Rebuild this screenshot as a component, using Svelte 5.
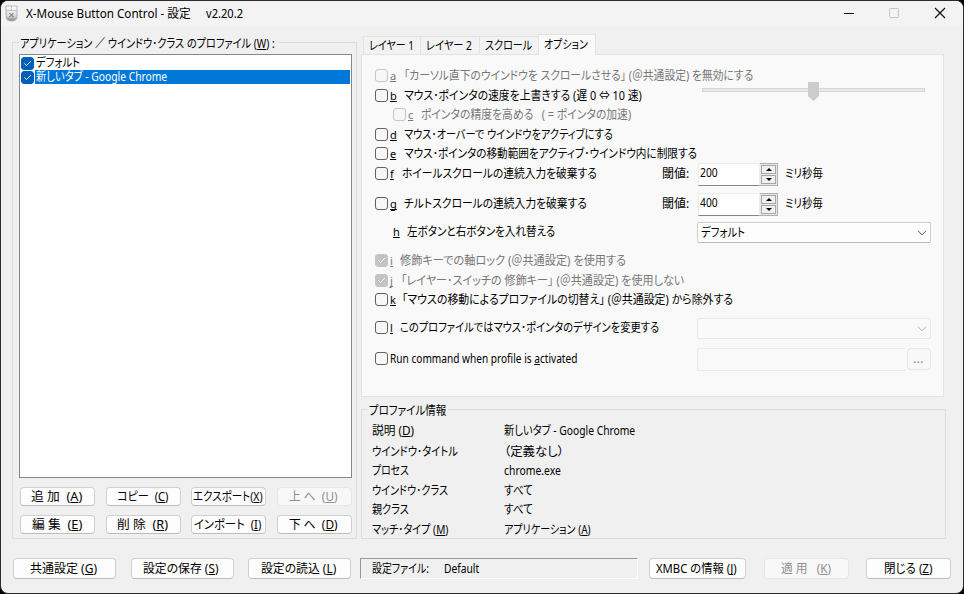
<script>
  // Labels use "&" before their mnemonic character, which is underlined.
  const parse = (s) => {
    const i = s.indexOf('&');
    return i < 0 ? [s, '', ''] : [s.slice(0, i), s[i + 1], s.slice(i + 2)];
  };

  // Condenses a label horizontally so that it occupies the given width.
  function fit(node, width) {
    const inner = node.firstElementChild;
    const natural = inner.offsetWidth;
    if (width && natural) {
      node.style.width = width + 'px';
      inner.style.transform = `scaleX(${width / natural})`;
    }
  }

  const profiles = [
    { name: 'デフォルト', w: 44, selected: false },
    { name: '新しいタブ - Google Chrome', w: 131, selected: true }
  ];
  const profileButtons = [
    { t: '追 加  (&A)', w: 51 }, { t: 'コピー  (&C)', w: 51 }, { t: 'エクスポート(&X)', w: 70 }, { t: '上 へ  (&U)', w: 49, off: true },
    { t: '編 集  (&E)', w: 50 }, { t: '削 除  (&R)', w: 51 }, { t: 'インポート  (&I)', w: 67 }, { t: '下 へ  (&D)', w: 49 }
  ];
  const tabs = [
    { t: 'レイヤー 1', w: 45 }, { t: 'レイヤー 2', w: 46 }, { t: 'スクロール', w: 47 }, { t: 'オプション', w: 44, active: true }
  ];
  const options = [
    { k: 'a', t: '「カーソル直下のウインドウを スクロールさせる」 (＠共通設定) を無効にする', x: 404, w: 349, gap: 0, off: true },
    { k: 'b', t: 'マウス･ポインタの速度を上書きする (遅 0 ⇔ 10 速)', x: 404, w: 238, gap: 2, slider: true },
    { k: 'c', t: 'ポインタの精度を高める   ( = ポインタの加速)', x: 421, w: 210, gap: 1, off: true, indent: true },
    { k: 'd', t: 'マウス･オーバーで ウインドウをアクティブにする', x: 404, w: 209, gap: 2 },
    { k: 'e', t: 'マウス･ポインタの移動範囲をアクティブ･ウインドウ内に制限する', x: 404, w: 293, gap: 1 },
    { k: 'f', t: 'ホイールスクロールの連続入力を破棄する', x: 402, w: 195, gap: 2, spin: '200' },
    { k: 'g', t: 'チルトスクロールの連続入力を破棄する', x: 404, w: 183, gap: 12, spin: '400' },
    { k: 'h', t: '左ボタンと右ボタンを入れ替える', x: 407, w: 148, gap: 10, plain: true, combo: 'デフォルト' },
    { k: 'i', t: '修飾キーでの軸ロック (＠共通設定) を使用する', x: 400, w: 226, gap: 11, off: true, checked: true },
    { k: 'j', t: '「レイヤー･スイッチの 修飾キー」 (＠共通設定) を使用しない', x: 401, w: 283, gap: 2, off: true, checked: true },
    { k: 'k', t: '「マウスの移動によるプロファイルの切替え」 (＠共通設定) から除外する', x: 402, w: 331, gap: 1 },
    { k: 'l', t: 'このプロファイルではマウス･ポインタのデザインを変更する', x: 400, w: 259, gap: 10, combo: '', comboOff: true },
    { t: 'Run command when profile is &activated', w: 187, gap: 13, path: true }
  ];
  const info = [
    { t: '説明 (&D)', w: 42, v: '新しいタブ - Google Chrome', vw: 131, h: 21 },
    { t: 'ウインドウ･タイトル', w: 86, v: '（定義なし）', vw: 60, h: 19 },
    { t: 'プロセス', w: 37, v: 'chrome.exe', vw: 57, h: 20 },
    { t: 'ウインドウ･クラス', w: 76, v: 'すべて', vw: 29, h: 19 },
    { t: '親クラス', w: 37, v: 'すべて', vw: 29, h: 20 },
    { t: 'マッチ･タイプ (&M)', w: 76, v: 'アプリケーション (&A)', vw: 87, h: 20 }
  ];
</script>

{#snippet label(text, w)}
  {@const p = parse(text)}
  <span class="label" use:fit={w}><span class="ink">{p[0]}{#if p[1]}<u>{p[1]}</u>{/if}{p[2]}</span></span>
{/snippet}

{#snippet checkbox(checked, off)}
  <span class="check" class:checked class:off>
    {#if checked}
      <svg width="11" height="11" viewBox="0 0 11 11"><path d="M2.5 5.5 4.5 7.5 8.7 3.3" /></svg>
    {/if}
  </span>
{/snippet}

{#snippet chevron()}
  <svg class="chevron" width="10" height="6" viewBox="0 0 10 6"><path d="M1 .8 5 4.8 9 .8" /></svg>
{/snippet}

<div class="desktop">
  <div class="window">
    <header>
      <svg class="app-icon" width="13" height="17" viewBox="0 0 13 17">
        <defs><linearGradient id="mouse" x2="0" y2="1"><stop offset="0" stop-color="#fff" /><stop offset=".65" stop-color="#d8d8d8" /><stop offset="1" stop-color="#858585" /></linearGradient></defs>
        <path d="M1 1h11v10.5q0 4.5-5.5 4.5T1 11.500z" fill="url(#mouse)" stroke="#aaa" stroke-width=".8" />
        <path d="M1 5.500h11M6.500 1v4.500" stroke="#bbb" stroke-width=".8" fill="none" />
        <path d="M4.500 8 8.500 12M8.500 8 4.500 12" stroke="#666" fill="none" />
      </svg>
      <span class="title">{@render label('X-Mouse Button Control - 設定', 165)}</span>
      <span class="version">{@render label('v2.20.2', 37)}</span>
      <svg class="controls" width="104" height="14" viewBox="0 0 104 14">
        <path d="M3 6.500h10" stroke="#111" />
        <rect x="48.500" y="1.500" width="9" height="9" rx="1" stroke="#c5c5c5" fill="none" />
        <path d="M94 1 104 11M104 1 94 11" stroke="#111" stroke-width="1.200" />
      </svg>
    </header>

    <main>
      <section class="group profiles">
        <div class="legend">{@render label('アプリケーション ／ ウインドウ･クラス のプロファイル (&W) :', 255)}</div>
        <div class="list">
          {#each profiles as p}
            <div class="item">
              {@render checkbox(true, false)}
              <div class="name" class:selected={p.selected}>{@render label(p.name, p.w)}</div>
            </div>
          {/each}
        </div>
        <div class="buttons">
          {#each profileButtons as b}
            <button disabled={b.off}>{@render label(b.t, b.w)}</button>
          {/each}
        </div>
      </section>

      <section class="right">
        <nav>
          {#each tabs as t}
            <div class="tab" class:active={t.active}>{@render label(t.t, t.w)}</div>
          {/each}
        </nav>
        <div class="panel">
          {#each options as o}
            <div class="row" class:off={o.off} class:indent={o.indent} style:margin-top="{o.gap}px">
              <div class="caption" class:narrow={o.spin}>
                {#if o.plain}<span class="blank"></span>{:else}{@render checkbox(o.checked, o.off)}{/if}
                {#if o.k}
                  <span class="key" style:width="{o.x - (o.indent ? 408 : o.plain ? 393 : 390)}px"><u>{o.k}</u></span>
                {/if}
                {@render label(o.t, o.w)}
              </div>
              {#if o.slider}
                <div class="slider">
                  <svg width="11" height="19" viewBox="0 0 11 19"><path d="M0 0h11v14L5.500 19 0 14z" fill="#ccc" /></svg>
                </div>
              {:else if o.spin}
                <span class="threshold">{@render label('閾値:', 27)}</span>
                <div class="number">{@render label(o.spin, 18)}</div>
                <div class="spinner">
                  <span><svg width="6" height="3"><path d="M0 3 3 0 6 3z" /></svg></span>
                  <span><svg width="6" height="3"><path d="M0 0 3 3 6 0z" /></svg></span>
                </div>
                {@render label('ミリ秒毎', 38)}
              {:else if o.combo !== undefined}
                <div class="combo" class:off={o.comboOff}>
                  {#if o.combo}{@render label(o.combo, 44)}{/if}
                  {@render chevron()}
                </div>
              {:else if o.path}
                <div class="path"></div>
                <button class="browse" disabled>{@render label('...', 11)}</button>
              {/if}
            </div>
          {/each}
        </div>

        <div class="group info">
          <div class="legend">{@render label('プロファイル情報', 77)}</div>
          {#each info as i}
            <div class="entry" style:height="{i.h}px">
              <div class="term">{@render label(i.t, i.w)}</div>
              {@render label(i.v, i.vw)}
            </div>
          {/each}
        </div>
      </section>
    </main>

    <footer>
      <button class="wide">{@render label('共通設定 (&G)', 67)}</button>
      <button class="wide">{@render label('設定の保存 (&S)', 76)}</button>
      <button class="wide">{@render label('設定の読込 (&L)', 75)}</button>
      <div class="status">
        <span>{@render label('設定ファイル:', 57)}</span>
        {@render label('Default', 35)}
      </div>
      <button class="about">{@render label('XMBC の情報 (&J)', 81)}</button>
      <button class="apply" disabled>{@render label('適 用   (&K)', 50)}</button>
      <button class="close">{@render label('閉じる (&Z)', 48)}</button>
    </footer>
  </div>
</div>

<style>
  :global(body) { overflow: hidden; }
  * { box-sizing: border-box; }
  .desktop {
    width: 964px; height: 594px; background: #000; color: #000;
    font: 12px/16px "Noto Sans", "Noto Sans CJK JP", sans-serif;
  }
  .window {
    width: 964px; height: 594px; border: 1px solid #2c2c2e; border-radius: 8px;
    background: #f0f0f0; overflow: hidden; display: flex; flex-direction: column;
  }
  .label { display: inline-block; flex: none; white-space: pre; text-align: left; height: 16px; line-height: 16px; }
  .ink { display: inline-block; white-space: pre; transform-origin: 0 50%; font-feature-settings: "palt"; line-height: 16px; vertical-align: top; }
  u { text-decoration: underline; text-decoration-thickness: 1px; text-underline-offset: 1px; text-decoration-skip-ink: none; }

  header { height: 25px; flex: none; background: #f3f3f3; display: flex; align-items: center; padding: 0 18px 0 4px; }
  .app-icon { margin-right: 8px; }
  .version { margin-left: 15px; }
  .controls { margin-left: auto; overflow: visible; }

  main { display: flex; align-items: flex-start; padding: 16px 0 0 11px; height: 532px; flex: none; }
  .group { border: 1px solid #dcdcdc; }
  .legend { width: fit-content; height: 16px; padding: 0 2px; background: #f0f0f0; }
  .profiles { width: 345px; height: 497px; padding: 0 3px 0 6px; }
  .profiles .legend { margin: -7px 0 2px; padding: 0 4px 0 1px; }
  .list { width: 333px; height: 424px; background: #fff; border: 1px solid #828790; padding: 1px; }
  .item { display: flex; height: 14px; align-items: center; }
  .item .label, .item .ink { height: 14px; line-height: 14px; }
  .name { flex: 1; height: 14px; display: flex; align-items: center; padding-left: 1px; margin-left: 1px; }
  .name.selected { background: #0078d7; color: #fff; }
  .buttons { display: grid; grid-template-columns: repeat(4, 75px); column-gap: 10.600px; row-gap: 9px; margin: 9px 0 0 1px; }

  button {
    font: inherit; color: #000; background: #fdfdfd; border: 1px solid #d0d0d0; border-bottom-color: #bcbcbc;
    border-radius: 4px; height: 19px; padding: 0 2px 0 0; display: flex; justify-content: center; align-items: center;
  }
  button:disabled { color: #8f8f8f; background: #f8f8f8; border-color: #e6e6e6; }

  .check { width: 13px; height: 13px; border: 1px solid #626262; border-radius: 3px; background: #f7f7f7; display: flex; flex: none; }
  .row .check { margin-bottom: 1px; }
  .check.off { border-color: #c6c6c6; }
  .check.checked { background: #005fb8; border-color: #005fb8; }
  .check.checked.off { background: #c4c4c4; border-color: #c4c4c4; }
  .check path { fill: none; stroke: #fff; stroke-width: 1; }

  .right { margin: -8px 0 0 4px; }
  nav { display: flex; align-items: flex-end; height: 20px; padding-left: 2px; }
  .tab { width: 59px; height: 18px; border: 1px solid #e3e3e3; border-bottom: 0; border-left: 0; background: #f2f2f2; display: flex; justify-content: center; align-items: center; padding-right: 2px; }
  .tab:first-child { border-left: 1px solid #e3e3e3; width: 58px; }
  .tab.active { width: 58px; height: 21px; margin: 0 0 -1px -1px; background: #f9f9f9; border-left: 1px solid #e3e3e3; position: relative; }
  .panel { width: 583px; height: 343px; background: #f9f9f9; border: 1px solid #e3e3e3; padding: 12px 0 0 13px; }
  .row { height: 18px; display: flex; align-items: center; }
  .row.off { color: #777; }
  .caption { width: 322px; flex: none; display: flex; align-items: center; }
  .caption.narrow { width: 287px; }
  .indent { padding-left: 18px; }
  .key { display: inline-block; flex: none; font-size: 11px; }
  .check + .key, .check + .label { margin-left: 2px; }
  .blank { width: 18px; }
  .slider { width: 223px; height: 4px; margin: -12px 0 0 5px; background: #e7eaea; border: 1px solid #d6d6d6; display: flex; align-items: center; justify-content: center; }
  .slider svg { flex: none; margin-top: 3px; }
  .threshold { width: 35px; height: 16px; }
  .threshold + .number { margin-left: 1px; }
  .number { width: 62px; height: 23px; background: #fff; border: 1px solid #ececec; border-bottom-color: #868686; padding: 1px 0 0 1px; }
  .spinner { width: 18px; height: 23px; background: #e8e8e8; padding: 1px; display: flex; flex-direction: column; gap: 1px; margin-right: 7px; border: 1px solid #b0b0b0; border-left-width: 0; }
  .spinner span { flex: 1; background: #f0f0f0; border: 1px solid #a6a6a6; display: flex; align-items: center; justify-content: center; }
  .combo { width: 234px; height: 21px; border: 1px solid #cfcfcf; border-bottom-color: #bbb; border-radius: 2px; background: #fdfdfd; display: flex; align-items: center; padding: 1px 3px 0; }
  .combo.off { background: #fafafa; border-color: #e8e8e8; }
  .chevron { margin-left: auto; }
  .chevron path { fill: none; stroke: #555; }
  .combo.off .chevron path { stroke: #b0b0b0; }
  .path { width: 209px; height: 23px; border: 1px solid #eaeaea; border-right: 0; border-radius: 2px; }
  .browse { width: 24px; height: 22px; margin-left: 1px; background: #fafafa; }

  .info { width: 585px; height: 130px; margin-top: 12px; padding-left: 5px; }
  .info .legend { margin: -7px 0 4px; }
  .entry { display: flex; align-items: flex-start; padding-left: 5px; }
  .term { width: 132px; height: 16px; }

  footer { display: flex; align-items: center; height: 21px; padding-left: 12px; }
  footer button { height: 21px; flex: none; }
  .wide { width: 103px; margin-right: 14.500px; }
  .status { width: 278px; height: 21px; margin-left: -5.500px; border: 1px solid #fff; border-top-color: #989898; border-left-color: #989898; display: flex; align-items: center; padding-left: 11px; }
  .status > span:first-child { width: 72px; height: 16px; }
  .about { width: 97px; margin-left: 11px; }
  .apply { width: 85px; margin-left: 18px; }
  .close { width: 85px; margin-left: 17px; }
</style>
